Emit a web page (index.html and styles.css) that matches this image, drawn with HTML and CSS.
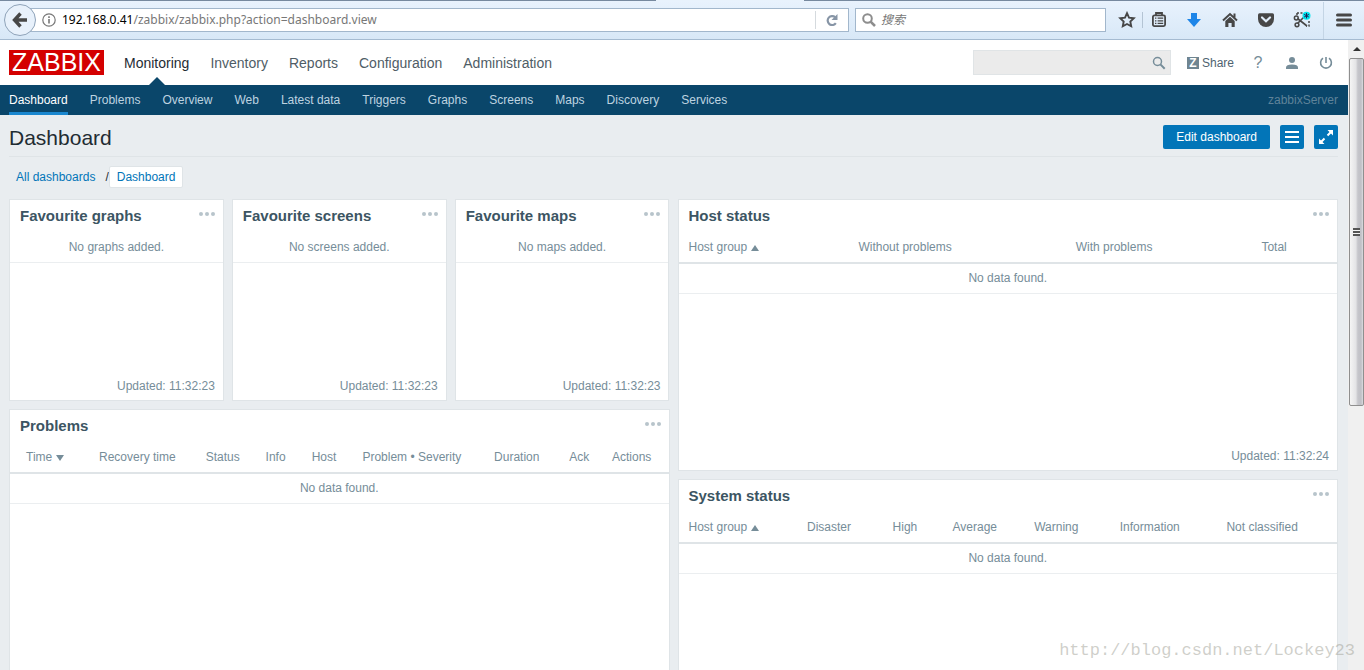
FILE: index.html
```html
<!DOCTYPE html>
<html lang="en">
<head>
<meta charset="utf-8">
<title>Dashboard</title>
<link rel="stylesheet" href="styles.css">
</head>
<body>
<div class="tab-edge"><span class="edge-left"></span><span class="edge-gap"></span><span class="edge-right"></span></div>
<div class="toolbar">
  <button class="back" aria-label="Back"><svg width="16" height="16" viewBox="0 0 16 16"><path d="M8.500 1.500 2.500 8l6 6.500M3 8h12" fill="none" stroke="#474747" stroke-width="3.400"/></svg></button>
  <div class="urlbar">
    <svg class="info" width="14" height="14" viewBox="0 0 14 14"><circle cx="7" cy="7" r="6.200" fill="none" stroke="#777" stroke-width="1.200"/><path d="M7 6v4.500M7 3.300v1.600" stroke="#777" stroke-width="1.600"/></svg>
    <div class="address" role="textbox" aria-label="Address" tabindex="0"><span class="host">192.168.0.41</span>/zabbix/zabbix.php?action=dashboard.view</div>
    <button class="reload" aria-label="Reload"><svg width="12" height="12" viewBox="0 0 12 12"><path d="M9.200 3.200A4.500 4.500 0 1 0 9.800 9.200" fill="none" stroke="#8795a6" stroke-width="2.200"/><path d="M11.500 0v6h-6z" fill="#8795a6"/></svg></button>
  </div>
  <div class="websearch">
    <svg width="14" height="14" viewBox="0 0 14 14"><circle cx="5.500" cy="5.500" r="4.300" fill="none" stroke="#8d8d8d" stroke-width="2"/><path d="M8.600 8.600 13 13" stroke="#8d8d8d" stroke-width="2.600"/></svg>
    <input type="text" class="websearch-input" placeholder="搜索" aria-label="搜索">
  </div>
  <div class="tools">
    <button class="tool tool-star" aria-label="Bookmark"><svg width="18" height="18" viewBox="0 0 18 18"><path d="M9 2.200 11 6.600l4.800.6-3.500 3.300.9 4.800L9 13l-4.200 2.300.9-4.800L2.200 7.200 7 6.600z" fill="none" stroke="#474747" stroke-width="1.900"/></svg></button>
    <button class="tool tool-list" aria-label="Bookmarks list"><svg width="16" height="16" viewBox="0 0 16 16"><path d="M5 3V1h6v2" fill="none" stroke="#474747" stroke-width="1.800"/><rect x="1.900" y="3.400" width="12.200" height="10.700" rx="1.500" fill="none" stroke="#474747" stroke-width="1.800"/><path d="M4 6.200h1.400M6.600 6.200h5.600M4 8.800h1.400M6.600 8.800h5.600M4 11.400h1.400M6.600 11.400h5.600" stroke="#474747" stroke-width="1.300"/></svg></button>
    <button class="tool" aria-label="Downloads"><svg width="16" height="16" viewBox="0 0 16 16"><path d="M5 1h6v6h4l-7 8-7-8h4z" fill="#1d85e8"/></svg></button>
    <button class="tool" aria-label="Home"><svg width="16" height="16" viewBox="0 0 16 16"><path d="M1 8.500 8 2l7 6.500M12.500 1.500v4" fill="none" stroke="#474747" stroke-width="2"/><path d="M3.300 9 8 4.800 12.700 9v6H9.600v-4H6.400v4H3.300z" fill="#474747"/></svg></button>
    <button class="tool" aria-label="Pocket"><svg width="18" height="16" viewBox="0 0 18 16"><path d="M2.500 1.200h13q1.500 0 1.500 1.500V7A8 8 0 0 1 1 7V2.700q0-1.500 1.500-1.500z" fill="#474747"/><path d="M5 5.500 9 9.300l4-3.800" fill="none" stroke="#e2eefa" stroke-width="2.200" stroke-linecap="round"/></svg></button>
    <button class="tool" aria-label="Screenshot"><svg width="18" height="18" viewBox="0 0 18 18"><path d="M4 2h6M4 2v3M16 10v5h-3" fill="none" stroke="#474747" stroke-width="1.500" stroke-dasharray="2 1.500"/><path d="M4.500 7.500 14 15M4.500 12.500 11 6" stroke="#474747" stroke-width="1.600"/><circle cx="3.300" cy="7" r="1.900" fill="none" stroke="#474747" stroke-width="1.500"/><circle cx="4" cy="13.800" r="1.900" fill="none" stroke="#474747" stroke-width="1.500"/><circle cx="13.500" cy="4.700" r="4" fill="#00e5ee"/><path d="M13.500 2v5.400M11.200 3.400l4.600 2.600M15.800 3.400l-4.600 2.600" stroke="#225" stroke-width="1"/></svg></button>
    <button class="tool tool-menu" aria-label="Menu"><svg width="16" height="14" viewBox="0 0 16 14"><path d="M1.500 2h13M1.500 7h13M1.500 12h13" stroke="#474747" stroke-width="3" stroke-linecap="round"/></svg></button>
  </div>
</div>

<div class="viewport">
  <div class="page">
    <header class="header">
      <a class="logo" href="#">ZABBIX</a>
      <nav class="menu">
        <a class="menu-item current" href="#">Monitoring</a>
        <a class="menu-item" href="#">Inventory</a>
        <a class="menu-item" href="#">Reports</a>
        <a class="menu-item" href="#">Configuration</a>
        <a class="menu-item" href="#">Administration</a>
      </nav>
      <div class="header-tools">
        <div class="site-search">
          <input type="text" class="site-search-input" aria-label="Search">
          <button class="site-search-button" aria-label="Search"><svg width="14" height="14" viewBox="0 0 14 14"><circle cx="5.500" cy="5.500" r="4" fill="none" stroke="#768d99" stroke-width="1.500"/><path d="m8.400 8.400 4.300 4.300" stroke="#768d99" stroke-width="2"/></svg></button>
        </div>
        <a class="share" href="#"><span class="share-icon">Z</span>Share</a>
        <a class="header-icon help" href="#" aria-label="Help">?</a>
        <a class="header-icon" href="#" aria-label="Profile"><svg width="12" height="14" viewBox="0 0 12 14"><circle cx="6" cy="4" r="3" fill="#768d99"/><path d="M0 13v-1.500Q0 8.500 6 8.500t6 3V13z" fill="#768d99"/></svg></a>
        <a class="header-icon" href="#" aria-label="Sign out"><svg width="14" height="14" viewBox="0 0 14 14"><path d="M4 2.200a5.400 5.400 0 1 0 6 0M7 1v6" fill="none" stroke="#768d99" stroke-width="1.600"/></svg></a>
      </div>
    </header>
    <nav class="submenu">
      <a class="sub-item selected" href="#">Dashboard</a>
      <a class="sub-item" href="#">Problems</a>
      <a class="sub-item" href="#">Overview</a>
      <a class="sub-item" href="#">Web</a>
      <a class="sub-item" href="#">Latest data</a>
      <a class="sub-item" href="#">Triggers</a>
      <a class="sub-item" href="#">Graphs</a>
      <a class="sub-item" href="#">Screens</a>
      <a class="sub-item" href="#">Maps</a>
      <a class="sub-item" href="#">Discovery</a>
      <a class="sub-item" href="#">Services</a>
      <span class="server">zabbixServer</span>
    </nav>
    <main class="content">
      <div class="title-row">
        <h1>Dashboard</h1>
        <button class="btn">Edit dashboard</button>
        <button class="btn btn-icon" aria-label="Actions"><svg width="14" height="12" viewBox="0 0 14 12"><path d="M0 1h14M0 6h14M0 11h14" stroke="#fff" stroke-width="2"/></svg></button>
        <button class="btn btn-icon" aria-label="Fullscreen"><svg width="14" height="14" viewBox="0 0 14 14"><path d="M8.500 0H14v5.500zM0 8.500V14h5.500z" fill="#fff"/><path d="m12 2-3.500 3.500M2 12l3.500-3.500" stroke="#fff" stroke-width="2"/></svg></button>
      </div>
      <nav class="crumbs"><a href="#">All dashboards</a><span class="slash">/</span><a class="crumb-current" href="#">Dashboard</a></nav>
      <div class="board">
        <div class="col-left">
          <div class="favourites">
            <section class="widget fav">
              <div class="widget-head"><h2>Favourite graphs</h2><button class="dots" aria-label="More"><i></i><i></i><i></i></button></div>
              <p class="empty">No graphs added.</p>
              <div class="updated">Updated: 11:32:23</div>
            </section>
            <section class="widget fav">
              <div class="widget-head"><h2>Favourite screens</h2><button class="dots" aria-label="More"><i></i><i></i><i></i></button></div>
              <p class="empty">No screens added.</p>
              <div class="updated">Updated: 11:32:23</div>
            </section>
            <section class="widget fav">
              <div class="widget-head"><h2>Favourite maps</h2><button class="dots" aria-label="More"><i></i><i></i><i></i></button></div>
              <p class="empty">No maps added.</p>
              <div class="updated">Updated: 11:32:23</div>
            </section>
          </div>
          <section class="widget grow">
            <div class="widget-head"><h2>Problems</h2><button class="dots" aria-label="More"><i></i><i></i><i></i></button></div>
            <table class="problems">
              <colgroup><col class="w12"><col class="w16"><col class="w9"><col class="w7"><col class="w8"><col class="w20"><col class="w11"><col class="w6"><col></colgroup>
              <thead><tr><th>Time<span class="down"></span></th><th>Recovery time</th><th>Status</th><th>Info</th><th>Host</th><th>Problem • Severity</th><th>Duration</th><th>Ack</th><th>Actions</th></tr></thead>
              <tbody><tr><td colspan="9">No data found.</td></tr></tbody>
            </table>
          </section>
        </div>
        <div class="col-right">
          <section class="widget host-status">
            <div class="widget-head"><h2>Host status</h2><button class="dots" aria-label="More"><i></i><i></i><i></i></button></div>
            <table>
              <colgroup><col class="w26"><col class="w33"><col class="w28"><col></colgroup>
              <thead><tr><th>Host group<span class="up"></span></th><th>Without problems</th><th>With problems</th><th>Total</th></tr></thead>
              <tbody><tr><td colspan="4">No data found.</td></tr></tbody>
            </table>
            <div class="updated">Updated: 11:32:24</div>
          </section>
          <section class="widget grow">
            <div class="widget-head"><h2>System status</h2><button class="dots" aria-label="More"><i></i><i></i><i></i></button></div>
            <table>
              <colgroup><col class="w18"><col class="w13"><col class="w9"><col class="w125"><col class="w13"><col class="w16"><col></colgroup>
              <thead><tr><th>Host group<span class="up"></span></th><th>Disaster</th><th>High</th><th>Average</th><th>Warning</th><th>Information</th><th>Not classified</th></tr></thead>
              <tbody><tr><td colspan="7">No data found.</td></tr></tbody>
            </table>
          </section>
        </div>
      </div>
    </main>
  </div>
  <div class="scrollbar">
    <span class="scroll-up"></span>
    <span class="thumb"><span class="grip"></span></span>
  </div>
</div>
<div class="watermark">http://blog.csdn.net/Lockey23</div>
</body>
</html>
```
FILE: styles.css
```css
* { box-sizing: border-box; }
body {
  margin: 0;
  height: 100vh;
  overflow: hidden;
  display: flex;
  flex-direction: column;
  font: 12px/18px "Liberation Sans", Arial, sans-serif;
  color: #768d99;
  background: #e9edf0;
}
a { color: #0275b8; text-decoration: none; }
button { border: 0; padding: 0; margin: 0; background: none; font: inherit; }
svg { display: block; }

/* browser toolbar */
.tab-edge { display: flex; height: 1px; background: #e8f2fc; }
.edge-left { flex: 656; background: #76899f; }
.edge-gap { flex: 148; }
.edge-right { flex: 560; background: #76899f; }
.toolbar {
  display: flex;
  align-items: center;
  height: 39px;
  padding-left: 4px;
  background: linear-gradient(#e8f2fd, #d8e8f7);
  border-bottom: 1px solid #a5bbd1;
}
.back {
  display: flex;
  align-items: center;
  justify-content: center;
  width: 32px;
  height: 32px;
  border: 1px solid #8fa3b9;
  border-radius: 50%;
  background: #e8f1fb;
  z-index: 1;
}
.urlbar, .websearch {
  display: flex;
  align-items: center;
  height: 24px;
  border: 1px solid #a2b7cc;
  background: #fff;
}
.urlbar { flex: 806; margin-left: -8px; padding-left: 13px; }
.address {
  flex: 1;
  margin-left: 6px;
  font: 12px/22px "Noto Sans", "Open Sans", sans-serif;
  color: #777;
}
.host { color: #000; }
.reload {
  display: flex;
  align-items: center;
  justify-content: center;
  width: 33px;
  height: 18px;
  border-left: 1px solid #d5dade;
}
.websearch { flex: 243; margin-left: 6px; padding-left: 6px; }
.websearch-input {
  flex: 1;
  min-width: 0;
  margin-left: 5px;
  padding: 0;
  border: 0;
  font: italic 12px "Liberation Sans", "Noto Sans CJK SC", sans-serif;
}
.websearch-input::placeholder { color: #777; }
.tools { display: flex; align-items: center; margin-left: 6px; }
.tool { display: flex; align-items: center; justify-content: center; width: 36px; height: 16px; }
.tool-star { width: 31px; border-right: 1px solid #b4c4d4; }
.tool-list { width: 31px; margin-right: 2px; }
.tool-menu { width: 41px; height: 37px; border-left: 1px solid #c4d5e5; margin-left: 3px; }

/* page header */
.viewport { flex: 1; min-height: 0; display: flex; }
.page { flex: 1; min-width: 0; display: flex; flex-direction: column; }
.header {
  display: flex;
  align-items: center;
  height: 45px;
  padding: 0 10px 0 9px;
  background: #fff;
}
.logo {
  width: 95px;
  text-align: center;
  font-size: 25px;
  line-height: 25px;
  color: #fff;
  background: #d40000;
}
.menu { display: flex; gap: 21px; margin-left: 20px; }
.menu-item { position: relative; padding-top: 2px; font-size: 14px; line-height: 43px; color: #4f5d66; }
.menu-item.current { color: #1f2c33; }
.menu-item.current::after {
  content: "";
  position: absolute;
  left: 50%;
  bottom: 0;
  margin-left: -8px;
  border: 8px solid transparent;
  border-top: 0;
  border-bottom-color: #0a466a;
}
.header-tools { display: flex; align-items: center; margin-left: auto; }
.site-search {
  display: flex;
  align-items: center;
  width: 198px;
  height: 25px;
  border: 1px solid #e0e4e6;
  background: #ebebeb;
}
.site-search-input { flex: 1; min-width: 0; border: 0; background: none; }
.site-search-button { margin-right: 4px; }
.share { display: flex; align-items: center; gap: 3px; margin: 0 12px 0 16px; color: #4f6370; }
.share-icon {
  width: 12px;
  font-weight: bold;
  line-height: 12px;
  text-align: center;
  color: #fff;
  background: #6f8591;
}
.header-icon { display: flex; align-items: center; justify-content: center; width: 24px; margin-left: 10px; }
.share + .header-icon { margin-left: 4px; }
.share + .header-icon { margin-left: 0; }
.help { font-size: 16px; color: #768d99; }
.submenu {
  display: flex;
  gap: 22px;
  height: 30px;
  padding: 0 10px 0 9px;
  background: #0a466a;
}
.sub-item { line-height: 30px; color: #bed3e0; }
.sub-item.selected { color: #fff; border-bottom: 3px solid #1a87cf; }
.server { margin-left: auto; line-height: 30px; color: #5f8399; }

/* title and breadcrumbs */
.content { flex: 1; min-height: 0; display: flex; flex-direction: column; padding: 0 10px 0 9px; }
.title-row {
  display: flex;
  align-items: center;
  gap: 10px;
  padding: 10px 0 7px;
  border-bottom: 1px solid #dfe4e7;
}
h1 { flex: 1; margin: 0; padding-top: 2px; font-size: 21px; line-height: 22px; font-weight: normal; color: #1f2c33; }
.btn {
  display: flex;
  align-items: center;
  justify-content: center;
  height: 24px;
  padding: 0 13px;
  border-radius: 2px;
  color: #fff;
  background: #0275b8;
}
.btn-icon { width: 24px; padding: 0; }
.crumbs { display: flex; align-items: center; padding: 9px 0 11px 7px; }
.slash { margin-left: 10px; color: #1f2c33; }
.crumb-current {
  padding: 1px 7px;
  border: 1px solid #dfe4e7;
  border-radius: 2px;
  background: #fff;
}

/* widgets */
.board { flex: 1; min-height: 0; display: grid; grid-template-columns: 1fr 1fr; gap: 8px; }
.col-left, .col-right { display: flex; flex-direction: column; gap: 8px; min-width: 0; }
.favourites { display: grid; grid-template-columns: repeat(3, 1fr); gap: 8px; }
.widget { display: flex; flex-direction: column; border: 1px solid #dfe4e7; background: #fff; }
.fav { height: 202px; }
.host-status { height: 272px; }
.grow { flex: 1; border-bottom: 0; }
.widget-head { display: flex; justify-content: space-between; align-items: flex-start; height: 32px; padding: 7px 8px 0 10px; }
h2 { margin: 0; font-size: 15px; line-height: 18px; font-weight: bold; color: #3c5563; }
.dots { display: flex; gap: 2px; padding: 5px 0; }
.dots i { width: 4px; height: 4px; border-radius: 50%; background: #b8c4cb; }
.empty { margin: 0; padding: 6px 10px; text-align: center; border-bottom: 1px solid #ebeef0; }
.updated { margin-top: auto; padding: 0 8px 5px; text-align: right; }
table { width: 100%; table-layout: fixed; border-spacing: 0; }
th {
  padding: 6px 0 6px 10px;
  font-weight: normal;
  text-align: left;
  white-space: nowrap;
  border-bottom: 2px solid #dfe4e7;
}
.problems th:first-child { padding-left: 16px; }
td { padding: 5px 0 6px; text-align: center; border-bottom: 1px solid #ebeef0; }
.up, .down { display: inline-block; margin-left: 4px; border: 4px solid transparent; }
.up { border-top: 0; border-bottom: 6px solid #768d99; }
.down { border-bottom: 0; border-top: 6px solid #768d99; }
.w6 { width: 6.5%; }
.w7 { width: 7%; }
.w8 { width: 7.7%; }
.w9 { width: 9.1%; }
.w11 { width: 11.4%; }
.w12 { width: 12%; }
.w125 { width: 12.4%; }
.w13 { width: 13%; }
.w16 { width: 16.2%; }
.w18 { width: 18%; }
.w20 { width: 20%; }
.w26 { width: 25.8%; }
.w28 { width: 28.2%; }
.w33 { width: 33%; }

/* window scrollbar */
.scrollbar { width: 16px; padding-left: 1px; background: #f0f0f0; }
.scroll-up { display: flex; align-items: center; justify-content: center; height: 18px; }
.scroll-up::before { content: ""; border: 4px solid transparent; border-top: 0; border-bottom-color: #333; }
.thumb {
  display: flex;
  align-items: center;
  justify-content: center;
  height: 57%;
  max-height: 348px;
  border: 1px solid #8f8f8f;
  border-radius: 2px;
  background: linear-gradient(90deg, #f5f5f5, #e4e4e6 45%, #c6c6cb 60%, #c0c0c6 85%, #dcdce0);
}
.grip { width: 7px; height: 8px; background: repeating-linear-gradient(#555 0 2px, #f5f5f5 2px 3px); }

.watermark {
  position: absolute;
  right: 9px;
  bottom: 9px;
  font: 17px/20px "Liberation Mono", monospace;
  color: rgba(160, 160, 150, 0.5);
}
```
